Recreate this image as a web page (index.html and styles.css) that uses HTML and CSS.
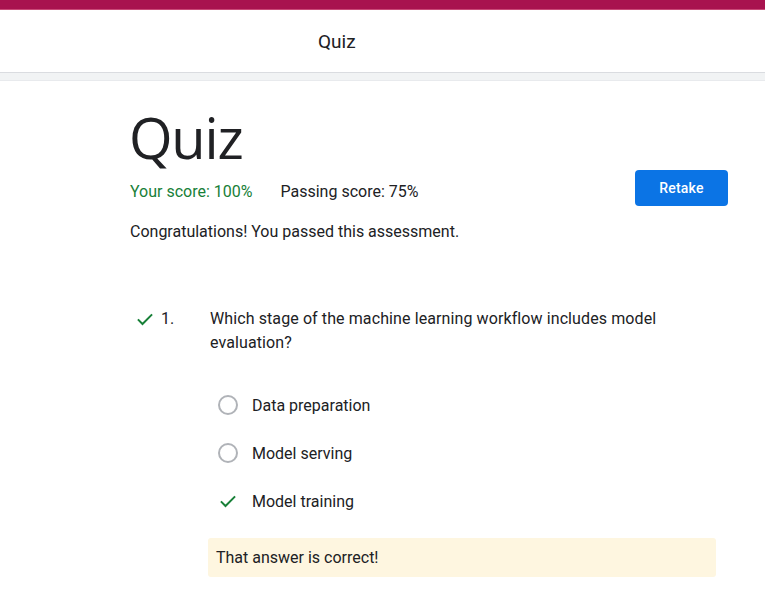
FILE: index.html
```html
<!DOCTYPE html>
<html>
<head>
<meta charset="utf-8">
<link rel="stylesheet" href="styles.css">
</head>
<body>
<div class="topbar"></div>
<header class="header"><span class="header-title">Quiz</span></header>
<div class="subbar"></div>
<main class="main">
  <div class="summary">
    <div class="summary-left">
      <h1 class="title">Quiz</h1>
      <div class="scores">
        <span class="your-score">Your score: 100%</span>
        <span class="pass-score">Passing score: 75%</span>
      </div>
      <p class="congrats">Congratulations! You passed this assessment.</p>
    </div>
    <button class="retake">Retake</button>
  </div>
  <section class="question">
    <div class="q-head">
      <div class="q-marker">
        <svg class="check" width="20" height="20" viewBox="0 0 24 24"><path d="M3.5 12.5 L9 18 L20.5 6.5" fill="none" stroke="#188038" stroke-width="2.4"/></svg>
        <span class="q-num">1.</span>
      </div>
      <div class="q-text">Which stage of the machine learning workflow includes model evaluation?</div>
    </div>
    <ul class="options">
      <li class="option"><span class="radio"></span><span>Data preparation</span></li>
      <li class="option"><span class="radio"></span><span>Model serving</span></li>
      <li class="option"><svg class="check opt-check" width="20" height="20" viewBox="0 0 24 24"><path d="M3.5 12.5 L9 18 L20.5 6.5" fill="none" stroke="#188038" stroke-width="2.4"/></svg><span>Model training</span></li>
    </ul>
    <div class="feedback">That answer is correct!</div>
  </section>
</main>
</body>
</html>
```

FILE: styles.css
```css
* { box-sizing: border-box; }
body {
  margin: 0;
  font-family: Roboto, "Noto Sans", Arial, sans-serif;
  color: #202124;
  background: #fff;
}
.topbar {
  height: 10px;
  background: #a8134f;
  border-bottom: 1px solid #c94a78;
}
.header {
  height: 63px;
  display: flex;
  align-items: center;
  padding-left: 318px;
  border-bottom: 1px solid #dadce0;
}
.header-title {
  font-size: 19px;
  color: #202124;
}
.subbar {
  height: 8px;
  background: #f1f3f4;
  border-bottom: 1px solid #e8eaed;
}
.main {
  padding: 0 37px 0 130px;
}
.summary {
  display: flex;
  justify-content: space-between;
  align-items: flex-start;
}
.title {
  margin: 20px 0 0 -1px;
  font-family: "Open Sans", Roboto, sans-serif;
  font-weight: 400;
  font-size: 56px;
  line-height: 72px;
  letter-spacing: -1.2px;
  color: #202124;
}
.scores {
  margin-top: 9px;
  font-size: 16px;
  line-height: 20px;
  display: flex;
  gap: 28px;
}
.your-score { color: #188038; }
.congrats {
  margin: 20px 0 0 0;
  font-size: 16px;
  line-height: 20px;
}
.retake {
  margin-top: 89px;
  width: 93px;
  height: 36px;
  border: none;
  border-radius: 4px;
  background: #0b74e5;
  color: #fff;
  font-family: Roboto, sans-serif;
  font-weight: 500;
  font-size: 14px;
  letter-spacing: 0.2px;
}
.question {
  margin-top: 65px;
}
.q-head {
  display: flex;
  font-size: 16px;
  line-height: 24px;
}
.q-marker {
  width: 80px;
  flex: none;
  display: flex;
  align-items: center;
  gap: 6px;
  height: 24px;
  padding-left: 5px;
}
.q-text {
  width: 470px;
  letter-spacing: 0.1px;
}
.options {
  list-style: none;
  margin: 38px 0 0 0;
  padding: 0 0 0 88px;
  display: flex;
  flex-direction: column;
  gap: 24px;
}
.option {
  display: flex;
  align-items: center;
  gap: 14px;
  height: 24px;
  font-size: 16px;
}
.radio {
  width: 20px;
  height: 20px;
  border: 2px solid #b0b3b8;
  border-radius: 50%;
  flex: none;
}
.opt-check { flex: none; }
.feedback {
  margin: 25px 0 0 78px;
  width: 508px;
  height: 39px;
  background: #fef6e0;
  border-radius: 3px;
  padding-left: 8px;
  display: flex;
  align-items: center;
  font-size: 16px;
}
```
